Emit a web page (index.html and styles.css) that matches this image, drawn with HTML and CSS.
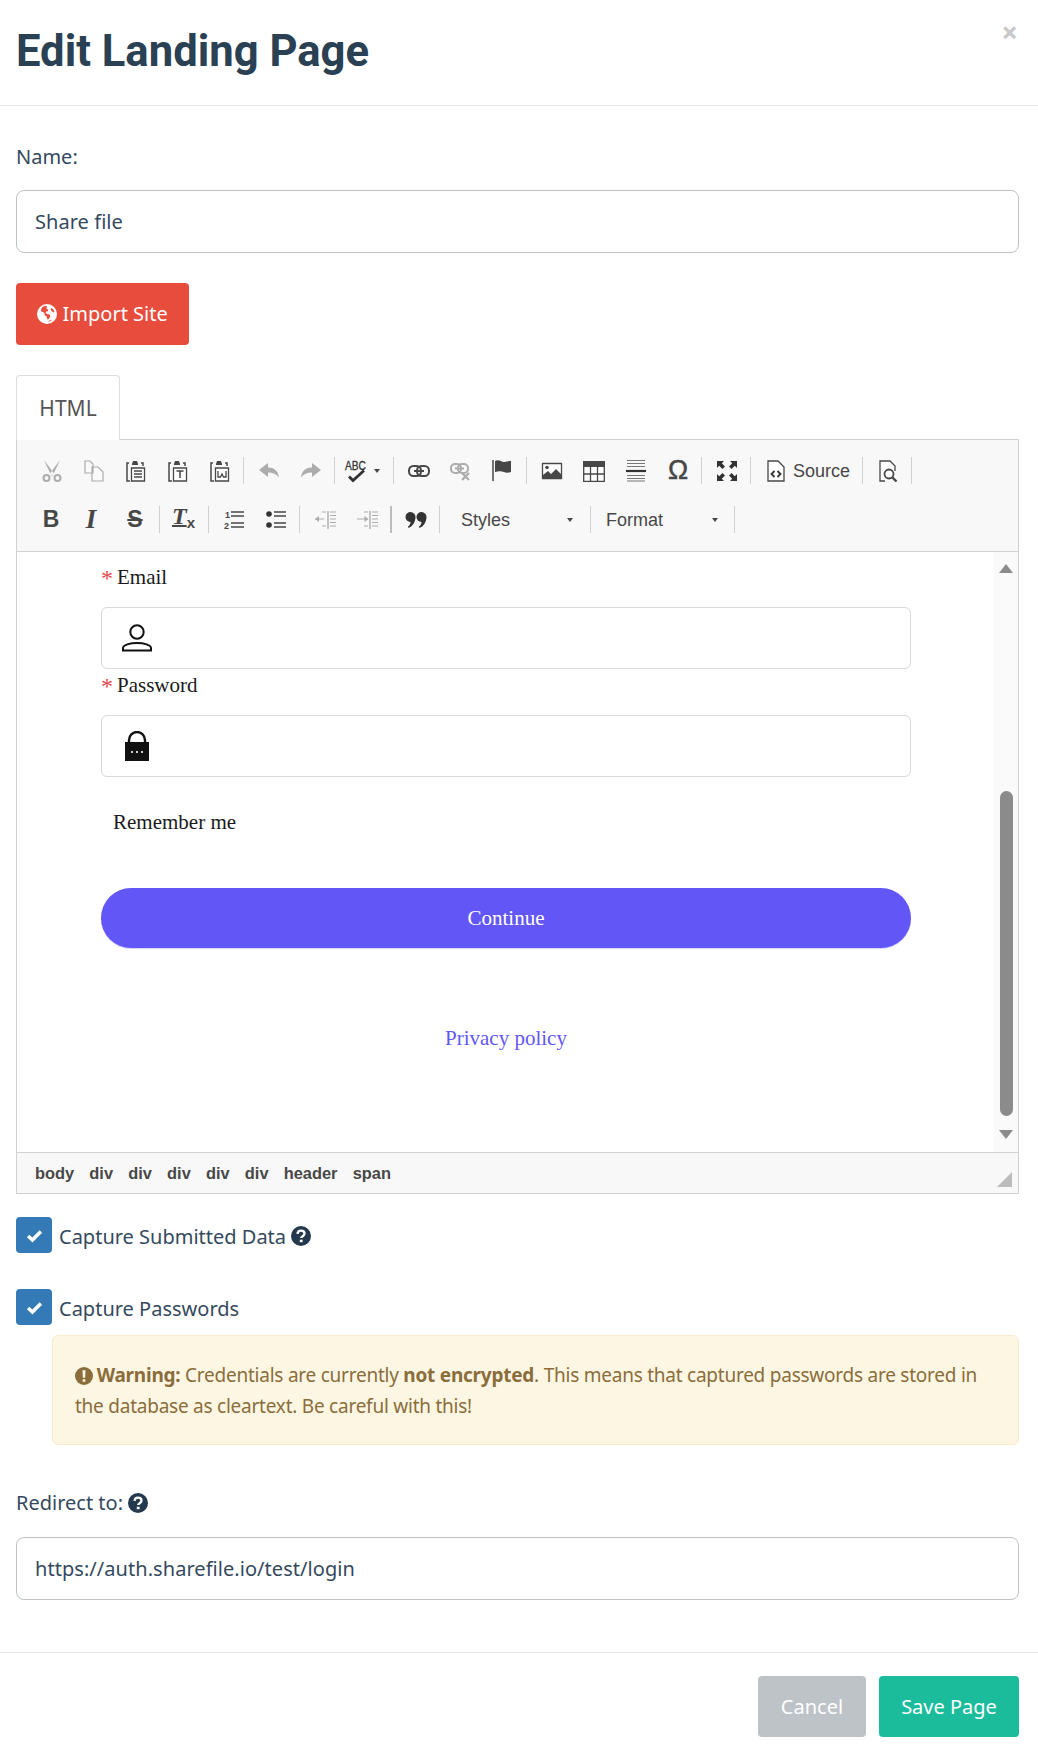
FILE: index.html
```html
<!DOCTYPE html>
<html lang="en">
<head>
    <meta charset="utf-8">
    <title>Edit Landing Page</title>
    <link rel="stylesheet" href="styles.css">
</head>
<body>
    <header class="modal-header">
        <h1 class="modal-title">Edit Landing Page</h1>
        <span class="close">×</span>
    </header>

    <main class="modal-body">
        <div class="label name-label">Name:</div>
        <div class="text-input">Share file</div>

        <button class="btn btn-danger import-btn">
            <svg class="fa" viewBox="0 0 20 20"><circle cx="10" cy="10" r="10" fill="#fff"/><path fill="#e94e3e" d="M6 2.500l3-.8 1.200 1.200-1 1.300 1.600 1 .4 2-2 .3-.6 1.500 2 1.200 2.200.3.600 2-1.600 2.500-1.400.6-.8-3-2-1.600-.4-2.200L4 7.200l.2-2.400zM14 4l2 1 1.400 2.400-.6 1-1.800-.8-1.200-1.600zM11 17.800l2.400-.6 1-1.200-1.600.2z"/></svg>
            Import Site
        </button>

        <div class="tabs"><span class="tab">HTML</span></div>

        <section class="editor">
            <div class="toolbar">
                <div class="tb-row">
                    <span class="tb off"><svg viewBox="0 0 22 22"><g fill="none" stroke="#333" stroke-width="2"><circle cx="5.500" cy="18" r="3"/><circle cx="16.500" cy="18" r="3"/></g><path d="M3 0l10 13.500-2.500 2.500zM19 0L9 13.500l2.500 2.500z" fill="#333"/></svg></span>
                    <span class="tb off"><svg viewBox="0 0 22 22"><path d="M2 1h5l3 3v9H2zM9 7h6l5 5v9H9z" fill="#fff" stroke="#333" stroke-width="1.200"/></svg></span>
                    <span class="tb"><svg viewBox="0 0 22 22"><path d="M4 3H2v18h3M16 3h2v3" fill="none" stroke="#474747" stroke-width="1.500"/><path d="M7 4l1-3h4l1 3v1H7z" fill="#474747"/><path d="M6.500 8h13v13h-13z" fill="#fff" stroke="#474747" stroke-width="1.300"/><path d="M9 11h8M9 14h8M9 17h8" stroke="#474747" stroke-width="1.300"/></svg></span>
                    <span class="tb"><svg viewBox="0 0 22 22"><path d="M4 3H2v18h3M16 3h2v3" fill="none" stroke="#474747" stroke-width="1.500"/><path d="M7 4l1-3h4l1 3v1H7z" fill="#474747"/><path d="M6.500 8h13v13h-13z" fill="#fff" stroke="#474747" stroke-width="1.300"/><path d="M9.500 11h7M13 11v7" stroke="#474747" stroke-width="1.500"/></svg></span>
                    <span class="tb"><svg viewBox="0 0 22 22"><path d="M4 3H2v18h3M16 3h2v3" fill="none" stroke="#474747" stroke-width="1.500"/><path d="M7 4l1-3h4l1 3v1H7z" fill="#474747"/><path d="M6.500 8h13v13h-13z" fill="#fff" stroke="#474747" stroke-width="1.300"/><path d="M9 11v6h2.500L13 14l1.500 3H17v-6" fill="none" stroke="#474747" stroke-width="1.300"/></svg></span>
                    <span class="sep"></span>
                    <span class="tb off"><svg viewBox="0 0 22 22"><path d="M1 10l9-7v4.500c6 0 10 3 11 10-2.500-3.500-6-5-11-5V17z" fill="#333"/></svg></span>
                    <span class="tb off"><svg viewBox="0 0 22 22"><path d="M21 10l-9-7v4.500c-6 0-10 3-11 10 2.500-3.500 6-5 11-5V17z" fill="#333"/></svg></span>
                    <span class="sep"></span>
                    <span class="tb tb-spell"><svg viewBox="0 0 24 24"><text x="1" y="11" class="svg-abc" textLength="21" lengthAdjust="spacingAndGlyphs">ABC</text><path d="M5 17.500l4 4 11-10" fill="none" stroke="#333" stroke-width="2.800"/></svg><i class="caret"></i></span>
                    <span class="sep"></span>
                    <span class="tb"><svg viewBox="0 0 22 22"><rect x="1" y="6" width="12" height="10" rx="4.500" fill="none" stroke="#474747" stroke-width="2"/><rect x="9" y="6" width="12" height="10" rx="4.500" fill="none" stroke="#474747" stroke-width="2"/><path d="M6 11h10" stroke="#474747" stroke-width="2"/></svg></span>
                    <span class="tb off"><svg viewBox="0 0 22 22"><rect x="1" y="4" width="10" height="9" rx="4" fill="none" stroke="#333" stroke-width="2"/><rect x="8" y="4" width="10" height="9" rx="4" fill="none" stroke="#333" stroke-width="2"/><path d="M5 8.500h9" stroke="#333" stroke-width="2"/><path d="M12 13l7 7M19 13l-7 7" stroke="#333" stroke-width="2.200"/></svg></span>
                    <span class="tb"><svg viewBox="0 0 22 22"><path d="M1 0v21" stroke="#474747" stroke-width="1.500"/><path d="M3 1c4-2 6 1 9 1 3 0 4-1 7-1v11c-3 1-5 1-7 0-3-1-5-1-9 0z" fill="#474747"/></svg></span>
                    <span class="sep"></span>
                    <span class="tb"><svg viewBox="0 0 22 22"><path d="M1.500 3.500h19v15h-19z" fill="#fff" stroke="#474747" stroke-width="1.300"/><circle cx="6" cy="7.500" r="1.800" fill="#474747"/><path d="M2 18v-3l5-4 3 3 5-5 5 5v4z" fill="#474747"/></svg></span>
                    <span class="tb"><svg viewBox="0 0 22 22"><path d="M0 1h22v21H0z" fill="#fff"/><path d="M0 1h22v6H0z" fill="#474747"/><path d="M.7 1v20.300h20.600V1M7.500 7v14M14.500 7v14M1 14h20" fill="none" stroke="#474747" stroke-width="1.300"/></svg></span>
                    <span class="tb"><svg viewBox="0 0 22 22"><path d="M2 .5h18M2 3.500h18M2 6.500h18M2 15.500h18M2 18.500h18M2 21h18" stroke="#777" stroke-width="1"/><path d="M1 11h20" stroke="#333" stroke-width="2.200"/></svg></span>
                    <span class="tb"><span class="omega">Ω</span></span>
                    <span class="sep"></span>
                    <span class="tb"><svg viewBox="0 0 22 22"><path d="M1 1h7L5.800 3.200 9 6.400 6.400 9 3.200 5.800 1 8zM21 1v7l-2.200-2.200L15.600 9 13 6.400l3.200-3.200L14 1zM1 21v-7l2.200 2.200L6.400 13 9 15.600l-3.200 3.200L8 21zM21 21h-7l2.200-2.200-3.200-3.200 2.600-2.600 3.200 3.200L21 14z" fill="#333"/></svg></span>
                    <span class="sep"></span>
                    <span class="tb tb-source"><svg viewBox="0 0 18 22"><path d="M1 1h10l6 6v14H1z" fill="#fff" stroke="#474747" stroke-width="1.300"/><path d="M7.500 11l-3 3 3 3M10.500 11l3 3-3 3" fill="none" stroke="#333" stroke-width="1.800"/></svg><span>Source</span></span>
                    <span class="sep"></span>
                    <span class="tb"><svg viewBox="0 0 22 22"><path d="M8 21H3V1h10l5 5v5" fill="#fff" stroke="#474747" stroke-width="1.300"/><circle cx="12" cy="14" r="4.500" fill="#fff" stroke="#474747" stroke-width="1.800"/><path d="M15 17l4.500 4.500" stroke="#474747" stroke-width="2.400"/></svg></span>
                    <span class="sep"></span>
                </div>
                <div class="tb-row">
                    <span class="tb"><span class="glyph glyph-b">B</span></span>
                    <span class="tb"><span class="glyph glyph-i">I</span></span>
                    <span class="tb"><span class="glyph glyph-s">S</span></span>
                    <span class="sep"></span>
                    <span class="tb"><span class="glyph glyph-t">T<small>x</small></span></span>
                    <span class="sep"></span>
                    <span class="tb"><svg viewBox="0 0 22 22"><text x="2" y="9" class="svg-num">1</text><text x="1" y="20" class="svg-num">2</text><path d="M8 3h13M8 7h13M8 14h13M8 18h13" stroke="#474747" stroke-width="1.700"/></svg></span>
                    <span class="tb"><svg viewBox="0 0 22 22"><circle cx="4" cy="5" r="2.800" fill="#333"/><circle cx="4" cy="16" r="2.800" fill="#333"/><path d="M9 3h12M9 7h12M9 14h12M9 18h12" stroke="#474747" stroke-width="1.700"/></svg></span>
                    <span class="sep"></span>
                    <span class="tb off"><svg viewBox="0 0 22 22"><path d="M14 2v18" stroke="#333" stroke-width="1.400"/><path d="M16 3h6M16 6.500h6M16 10h6M16 13.500h6M16 17h6M8 3h4M8 17h4M1 10h9" stroke="#333" stroke-width="1.200"/><path d="M1 10l4-3v6z" fill="#333"/></svg></span>
                    <span class="tb off"><svg viewBox="0 0 22 22"><path d="M14 2v18" stroke="#333" stroke-width="1.400"/><path d="M16 3h6M16 6.500h6M16 10h6M16 13.500h6M16 17h6M8 3h4M8 17h4M1 10h9" stroke="#333" stroke-width="1.200"/><path d="M12.500 10l-4-3v6z" fill="#333"/></svg></span>
                    <span class="sep sep-dark"></span>
                    <span class="tb"><svg viewBox="0 0 22 22"><path d="M5.500 3a5 5 0 0 1 5 5.500c-.3 5-3 9-7 10.500L3 17.500c1.500-1 2.300-2.500 2.500-4.500a5 5 0 0 1 0-10zM16.500 3a5 5 0 0 1 5 5.500c-.3 5-3 9-7 10.500l-.5-1.500c1.500-1 2.300-2.500 2.500-4.500a5 5 0 0 1 0-10z" fill="#333"/></svg></span>
                    <span class="sep"></span>
                    <span class="combo combo-styles">Styles<i class="caret"></i></span>
                    <span class="sep"></span>
                    <span class="combo combo-format">Format<i class="caret"></i></span>
                    <span class="sep"></span>
                </div>
            </div>

            <div class="content">
                <div class="form-label"><span class="req">*</span>Email</div>
                <div class="field">
                    <svg viewBox="0 0 30 30"><circle cx="15" cy="9" r="6.700" fill="none" stroke="#111" stroke-width="2"/><path d="M1 27.500V25c0-3 7-5 14-5s14 2 14 5v2.500z" fill="none" stroke="#111" stroke-width="2"/></svg>
                </div>
                <div class="form-label"><span class="req">*</span>Password</div>
                <div class="field">
                    <svg viewBox="0 0 30 30"><path d="M7 11V9a8 8 0 0 1 16 0v2" fill="none" stroke="#111" stroke-width="2.400"/><path d="M3 11h24v21H3z" fill="#111"/><circle cx="10" cy="21" r="1.100" fill="#fff"/><circle cx="15" cy="21" r="1.100" fill="#fff"/><circle cx="20" cy="21" r="1.100" fill="#fff"/></svg>
                </div>
                <div class="remember">Remember me</div>
                <div class="continue">Continue</div>
                <div class="privacy">Privacy policy</div>

                <div class="scrollbar">
                    <i class="arrow-up"></i>
                    <i class="thumb"></i>
                    <i class="arrow-down"></i>
                </div>
            </div>

            <div class="pathbar">
                <span>body</span><span>div</span><span>div</span><span>div</span><span>div</span><span>div</span><span>header</span><span>span</span>
                <i class="grip"></i>
            </div>
        </section>

        <div class="check-row check-first">
            <span class="checkbox"><svg viewBox="0 0 16 16"><path d="M2 8.500l4 3.700 8-8" fill="none" stroke="#fff" stroke-width="3.400"/></svg></span>
            <span class="check-label">Capture Submitted Data</span>
            <svg class="fa" viewBox="0 0 20 20"><circle cx="10" cy="10" r="10" fill="#24394d"/><path d="M6.500 7.800C6.700 5.700 8.200 4.600 10 4.600c2 0 3.500 1.200 3.500 3 0 2.600-3.300 2.500-3.300 4.500" fill="none" stroke="#fff" stroke-width="2.400"/><path d="M8.800 13.700h2.800v2.500H8.800z" fill="#fff"/></svg>
        </div>
        <div class="check-row check-second">
            <span class="checkbox"><svg viewBox="0 0 16 16"><path d="M2 8.500l4 3.700 8-8" fill="none" stroke="#fff" stroke-width="3.400"/></svg></span>
            <span class="check-label">Capture Passwords</span>
        </div>

        <div class="alert">
            <svg class="fa" viewBox="0 0 20 20"><circle cx="10" cy="10" r="10" fill="#8a6d3b"/><path d="M8.300 3.500h3.400l-.4 8.500H8.700zM8.500 13.500h3v3h-3z" fill="#fdf6e3"/></svg>
            <strong>Warning:</strong> Credentials are currently <strong>not encrypted</strong>. This means that captured passwords are stored in the database as cleartext. Be careful with this!
        </div>

        <div class="label redirect-label">
            Redirect to:
            <svg class="fa" viewBox="0 0 20 20"><circle cx="10" cy="10" r="10" fill="#24394d"/><path d="M6.500 7.800C6.700 5.700 8.200 4.600 10 4.600c2 0 3.500 1.200 3.500 3 0 2.600-3.300 2.500-3.300 4.500" fill="none" stroke="#fff" stroke-width="2.400"/><path d="M8.800 13.700h2.800v2.500H8.800z" fill="#fff"/></svg>
        </div>
        <div class="text-input">https://auth.sharefile.io/test/login</div>
    </main>

    <footer class="modal-footer">
        <button class="btn btn-cancel">Cancel</button>
        <button class="btn btn-save">Save Page</button>
    </footer>
</body>
</html>
```

FILE: styles.css
```css
* {
    box-sizing: border-box;
}

body {
    margin: 0;
    background: #fff;
    color: #2c3e50;
    font-family: "Noto Sans", sans-serif;
    font-size: 20px;
    line-height: 28px;
}

.fa {
    width: 20px;
    height: 20px;
    vertical-align: -3px;
}

/* header */

.modal-header {
    height: 106px;
    padding: 0 21px 0 16px;
    border-bottom: 1px solid #e5e5e5;
    display: flex;
    justify-content: space-between;
}

.modal-title {
    margin: 0;
    font-family: Roboto, sans-serif;
    font-size: 43.6px;
    font-weight: 700;
    line-height: 104px;
    color: #2a4053;
}

.close {
    font-family: Roboto, sans-serif;
    font-size: 28px;
    font-weight: 700;
    line-height: 66px;
    color: #c9c9c9;
}

/* form */

.modal-body {
    padding: 0 19px 0 16px;
}

.label {
    color: #34495e;
}

.name-label {
    margin-top: 37px;
    margin-bottom: 19px;
}

.redirect-label {
    margin-top: 44px;
    margin-bottom: 20px;
}

.text-input {
    height: 63px;
    padding: 0 18px;
    border: 1px solid #bdc3c7;
    border-radius: 8px;
    line-height: 62px;
    letter-spacing: .05px;
    color: #34495e;
}

.btn {
    border: 0;
    border-radius: 4px;
    font: inherit;
    color: #fff;
}

.btn-danger {
    background: #e74c3c;
}

.import-btn {
    display: block;
    width: 173px;
    height: 62px;
    margin-top: 30px;
    padding: 0;
}

.tabs {
    margin-top: 30px;
    height: 65px;
}

.tab {
    display: block;
    width: 104px;
    height: 65px;
    border: 1px solid #ddd;
    border-bottom: 0;
    border-radius: 4px 4px 0 0;
    background: #fff;
    position: relative;
    z-index: 1;
    text-align: center;
    line-height: 64px;
    font-size: 21px;
    color: #555;
}

/* editor */

.editor {
    margin-top: -1px;
    border: 1px solid #d1d1d1;
}

.toolbar {
    height: 112px;
    padding: 17px 0 0 14px;
    background: #f8f8f8;
    border-bottom: 1px solid #d1d1d1;
}

.tb-row {
    display: flex;
    align-items: center;
    height: 27px;
    margin-bottom: 22px;
}

.tb {
    width: 42px;
    height: 27px;
    display: flex;
    align-items: center;
    justify-content: center;
    flex: none;
}

.tb svg {
    width: 22px;
    height: 22px;
    flex: none;
}

.tb-spell {
    width: 52px;
    justify-content: flex-start;
    padding-left: 5px;
}

.tb-spell svg {
    width: 24px;
    height: 24px;
    overflow: visible;
}

.tb-source {
    width: 105px;
    justify-content: flex-start;
    padding-left: 12px;
    gap: 8px;
    font-family: "Liberation Sans", sans-serif;
    font-size: 18px;
    color: #474747;
}

.tb-source svg {
    width: 18px;
}

.off {
    opacity: .38;
}

.sep {
    flex: none;
    width: 1px;
    height: 27px;
    margin: 0 4px 0 2px;
    background: #d0d0d0;
}

.sep-dark {
    width: 2px;
    margin-right: 3px;
    background: #bcbcbc;
}

.caret {
    width: 0;
    height: 0;
    border: 3.5px solid transparent;
    border-top: 4px solid #474747;
    border-bottom: 0;
    flex: none;
}

.tb-spell .caret {
    margin-left: 6px;
}

.svg-abc {
    font-family: "Liberation Sans", sans-serif;
    font-size: 13px;
    font-weight: 400;
    fill: #333;
    stroke: #333;
    stroke-width: .3px;
}

.svg-num {
    font-family: "Liberation Sans", sans-serif;
    font-size: 9px;
    font-weight: 700;
    fill: #474747;
}

.omega {
    font-family: "Liberation Sans", sans-serif;
    font-size: 27px;
    font-weight: 400;
    line-height: 27px;
    color: #474747;
    -webkit-text-stroke: .5px #474747;
}

.glyph {
    color: #474747;
    font-weight: 700;
    line-height: 27px;
}

.glyph-b {
    font-family: "Liberation Sans", sans-serif;
    font-size: 23px;
    margin-left: -2px;
}

.glyph-i {
    font-family: "Liberation Serif", serif;
    font-style: italic;
    font-size: 27px;
    margin-left: -6px;
}

.glyph-s {
    font-family: "Liberation Sans", sans-serif;
    font-size: 23px;
    margin-left: -2px;
    text-decoration: line-through;
    text-decoration-thickness: 2px;
}

.glyph-t {
    font-family: "Liberation Serif", serif;
    font-style: italic;
    font-size: 24px;
    margin-left: -3px;
    text-decoration: underline;
    text-decoration-thickness: 2px;
}

.glyph-t small {
    font-family: "Liberation Sans", sans-serif;
    font-size: 15px;
    font-style: normal;
    display: inline-block;
    vertical-align: -4px;
}

.combo {
    flex: none;
    height: 27px;
    display: flex;
    align-items: center;
    justify-content: space-between;
    padding-left: 17px;
    padding-right: 15px;
    font-family: "Liberation Sans", sans-serif;
    font-size: 18px;
    color: #474747;
}

.combo-styles {
    width: 144px;
}

.combo-format {
    width: 137px;
    padding-left: 11px;
    padding-right: 14px;
}

/* editor content */

.content {
    position: relative;
    height: 600px;
    overflow: hidden;
    padding: 13px 107px 0 84px;
    background: #fff;
    font-family: "Liberation Serif", serif;
    font-size: 21px;
    line-height: 24px;
    color: #1a1a1a;
}

.req {
    color: #e5484d;
    font-size: 24px;
    margin-right: 4px;
    vertical-align: -2px;
    line-height: 0;
}

.form-label {
    margin-bottom: 18px;
    height: 24px;
}

.field {
    height: 62px;
    margin-bottom: 4px;
    padding-left: 20px;
    border: 1px solid #d9d9d9;
    border-radius: 6px;
    display: flex;
    align-items: center;
}

.field svg {
    width: 30px;
    height: 30px;
}

.remember {
    margin-top: 33px;
    padding-left: 12px;
}

.continue {
    height: 60px;
    margin-top: 54px;
    border-radius: 30px;
    background: #6257f6;
    box-shadow: 0 1px 0 #d7d4fb;
    color: #fff;
    text-align: center;
    line-height: 60px;
}

.privacy {
    margin-top: 78px;
    text-align: center;
    color: #6257f6;
}

.scrollbar {
    position: absolute;
    top: 0;
    right: 0;
    bottom: 0;
    width: 24px;
    background: #fafafa;
}

.arrow-up,
.arrow-down,
.thumb {
    position: absolute;
}

.arrow-up {
    left: 5px;
    top: 12px;
    border: 7px solid transparent;
    border-top: 0;
    border-bottom: 9px solid #8b8b8b;
}

.arrow-down {
    left: 5px;
    top: 578px;
    border: 7px solid transparent;
    border-bottom: 0;
    border-top: 9px solid #8b8b8b;
}

.thumb {
    left: 6px;
    top: 239px;
    width: 13px;
    height: 325px;
    border-radius: 7px;
    background: #8b8b8b;
}

.pathbar {
    height: 41px;
    padding-left: 18px;
    display: flex;
    align-items: center;
    gap: 15.2px;
    border-top: 1px solid #d1d1d1;
    background: #f8f8f8;
    font-family: "Liberation Sans", sans-serif;
    font-size: 16.4px;
    font-weight: 700;
    color: #484848;
}

.grip {
    width: 15px;
    height: 15px;
    margin: 13px 6px 0 auto;
    background: #bcbcbc;
    clip-path: polygon(100% 0, 100% 100%, 0 100%);
}

/* checkboxes */

.check-row {
    display: flex;
    align-items: center;
    gap: 7px;
    height: 36px;
}

.check-first {
    margin-top: 23px;
}

.check-second {
    margin-top: 36px;
}

.checkbox {
    width: 36px;
    height: 36px;
    border-radius: 4px;
    background: #337ab7;
    display: flex;
    align-items: center;
    justify-content: center;
}

.checkbox svg {
    width: 17px;
    height: 17px;
}

.check-label {
    color: #34495e;
    padding-top: 3px;
}

.check-row .fa {
    margin-left: -2px;
    margin-top: 2px;
}

/* warning */

.alert {
    margin: 10px 0 0 36px;
    height: 110px;
    padding: 24px 22px;
    border: 1px solid #faebcc;
    border-radius: 6px;
    background: #fdf6e3;
    color: #8a6d3b;
    font-size: 19px;
    letter-spacing: -.24px;
    line-height: 31px;
}

.alert .fa {
    width: 18px;
    height: 18px;
    margin-right: -1px;
}

/* footer */

.modal-footer {
    margin-top: 52px;
    padding: 23px 19px 0 0;
    border-top: 1px solid #e5e5e5;
    display: flex;
    justify-content: flex-end;
    gap: 13px;
}

.modal-footer .btn {
    height: 61px;
}

.btn-cancel {
    width: 108px;
    background: #bdc3c7;
}

.btn-save {
    width: 140px;
    background: #1abc9c;
}
```
